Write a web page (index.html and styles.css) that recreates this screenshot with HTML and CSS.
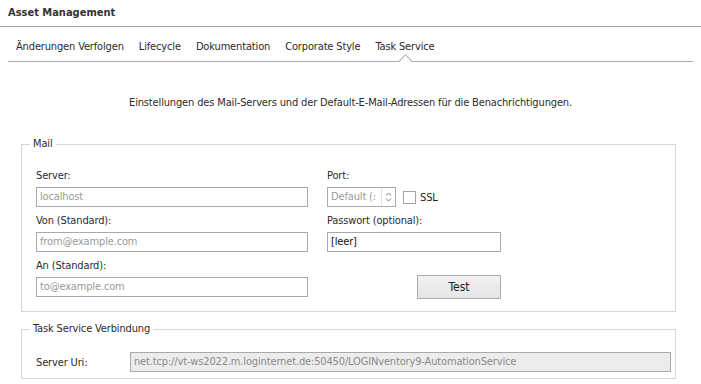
FILE: index.html
```html
<!DOCTYPE html>
<html lang="de">
<head>
<meta charset="utf-8">
<title>Asset Management</title>
<link rel="stylesheet" href="styles.css">
</head>
<body>
<div class="header">Asset Management</div>
<div class="tabs">
  <span class="tab">Änderungen Verfolgen</span>
  <span class="tab">Lifecycle</span>
  <span class="tab">Dokumentation</span>
  <span class="tab">Corporate Style</span>
  <span class="tab active">Task Service</span>
</div>
<p class="intro">Einstellungen des Mail-Servers und der Default-E-Mail-Adressen für die Benachrichtigungen.</p>

<fieldset class="group mail">
  <legend>Mail</legend>
  <div class="mail-grid">
    <div class="col">
      <div class="field">
        <div class="label">Server:</div>
        <div class="input wide placeholder">localhost</div>
      </div>
      <div class="field">
        <div class="label">Von (Standard):</div>
        <div class="input wide placeholder">from@example.com</div>
      </div>
      <div class="field last">
        <div class="label">An (Standard):</div>
        <div class="input wide placeholder">to@example.com</div>
      </div>
    </div>
    <div class="col right">
      <div class="field">
        <div class="label">Port:</div>
        <div class="port-row">
          <div class="input port placeholder">
            <span class="port-text">Default (:</span>
            <span class="spinner">
              <svg width="7" height="12" viewBox="0 0 7 12"><path d="M1 4.5 L3.5 2 L6 4.5" fill="none" stroke="#7a7a7a" stroke-width="1"/><path d="M1 7.5 L3.5 10 L6 7.5" fill="none" stroke="#7a7a7a" stroke-width="1"/></svg>
            </span>
          </div>
          <span class="checkbox"></span>
          <span class="ssl">SSL</span>
        </div>
      </div>
      <div class="field">
        <div class="label">Passwort (optional):</div>
        <div class="input pw">[leer]</div>
      </div>
      <div class="field last btn-row">
        <button class="btn">Test</button>
      </div>
    </div>
  </div>
</fieldset>

<fieldset class="group ts">
  <legend>Task Service Verbindung</legend>
  <div class="uri-row">
    <span class="uri-label">Server Uri:</span>
    <div class="input uri">net.tcp://vt-ws2022.m.loginternet.de:50450/LOGINventory9-AutomationService</div>
  </div>
</fieldset>
</body>
</html>
```
FILE: styles.css
```css
* { box-sizing: border-box; }
body {
  margin: 0;
  font-family: "DejaVu Sans Condensed", "DejaVu Sans", sans-serif;
  font-size: 11px;
  letter-spacing: -0.15px;
  color: #2b2b2b;
  background: #fff;
}
.header {
  height: 27px;
  padding: 6px 0 0 8px;
  line-height: 14px;
  font-weight: bold;
  letter-spacing: 0;
  color: #333;
  border-bottom: 1px solid #a4a4a4;
}
.tabs {
  margin: 0 8px;
  padding: 13px 0 7px 8px;
  line-height: 14px;
  display: flex;
  gap: 15px;
  border-bottom: 1px solid #ababab;
  height: 35px;
}
.tab { position: relative; color: #2a2a2a; }
.tab.active::after {
  content: "";
  position: absolute;
  left: 50%;
  bottom: -11px;
  width: 8px;
  height: 8px;
  margin-left: -4px;
  background: #fff;
  border-left: 1px solid #ababab;
  border-top: 1px solid #ababab;
  transform: rotate(45deg);
}
.intro {
  margin: 34px 0 0 0;
  line-height: 14px;
  text-align: center;
  color: #2b2b2b;
}
.group {
  margin: 27px 0 0 21px;
  width: 655px;
  padding: 0;
  border: 1px solid #d6d6d6;
}
.group legend {
  margin-left: 8px;
  padding: 0 3px;
  line-height: 14px;
  color: #2b2b2b;
}
.mail-grid {
  display: flex;
  gap: 19px;
  padding: 18px 0 12px 14px;
}
.col { display: flex; flex-direction: column; }
.col:first-child { width: 272px; }
.col.right { width: 174px; }
.field { margin-bottom: 7px; }
.field.last { margin-bottom: 0; }
.label { line-height: 14px; height: 14px; margin-bottom: 4px; color: #2b2b2b; }
.input {
  height: 20px;
  border: 1px solid #a9a9a9;
  background: #fff;
  line-height: 18px;
  padding: 0 3px;
  color: #222;
  white-space: nowrap;
  overflow: hidden;
}
.input.placeholder { color: #9a9a9a; }
.input.wide { width: 272px; }
.input.pw { width: 174px; color: #111; }
.port-row { display: flex; align-items: center; height: 20px; }
.input.port {
  width: 69px;
  display: flex;
  padding: 0 0 0 3px;
}
.port-text { flex: 1; overflow: hidden; }
.spinner {
  width: 14px;
  height: 18px;
  display: flex;
  align-items: center;
  justify-content: center;
  border-left: 1px solid #e2e2e2;
}
.checkbox {
  width: 13px;
  height: 13px;
  border: 1px solid #a2a2a2;
  background: #fff;
  margin-left: 7px;
}
.ssl { margin-left: 4px; color: #222; }
.btn-row { display: flex; justify-content: flex-end; padding-top: 16px; }
.btn {
  width: 84px;
  height: 24px;
  border: 1px solid #acacac;
  background: linear-gradient(#f2f2f2, #e5e5e5);
  font-family: inherit;
  font-size: 12px;
  color: #222;
  padding: 0;
}
.group.ts { margin-top: 10px; }
.uri-row {
  display: flex;
  align-items: center;
  padding: 16px 4px 6px 14px;
}
.uri-label { width: 94px; color: #2b2b2b; }
.input.uri {
  flex: 1;
  background: #ececec;
  color: #8a8a8a;
}
```
